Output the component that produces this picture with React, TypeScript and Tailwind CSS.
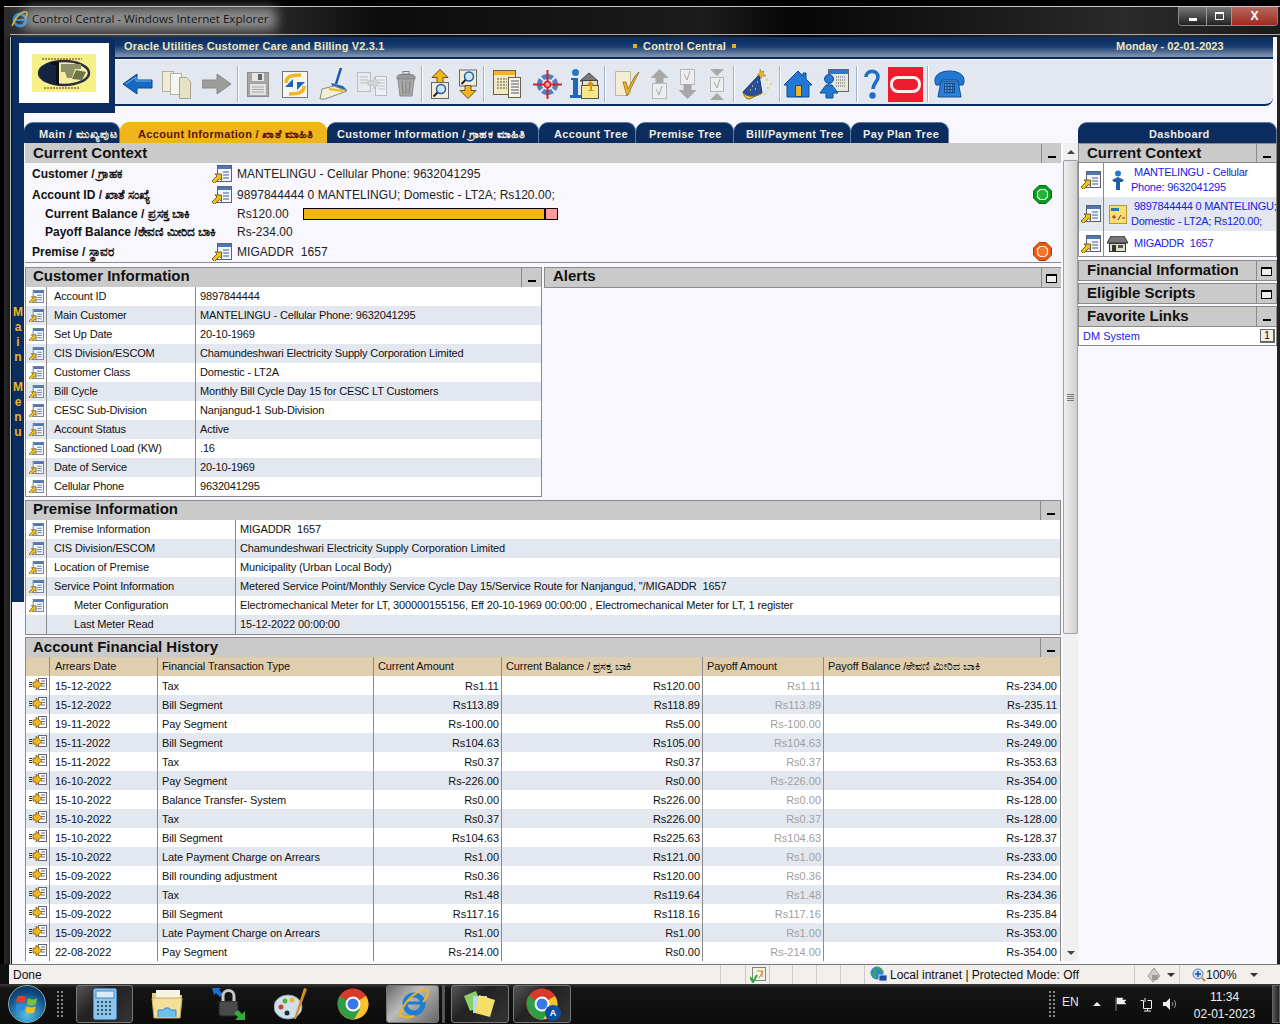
import React from 'react';

const customerRows = [
  ['Account ID', '9897844444'],
  ['Main Customer', 'MANTELINGU - Cellular Phone: 9632041295'],
  ['Set Up Date', '20-10-1969'],
  ['CIS Division/ESCOM', 'Chamundeshwari Electricity Supply Corporation Limited'],
  ['Customer Class', 'Domestic - LT2A'],
  ['Bill Cycle', 'Monthly Bill Cycle Day 15 for CESC LT Customers'],
  ['CESC Sub-Division', 'Nanjangud-1 Sub-Division'],
  ['Account Status', 'Active'],
  ['Sanctioned Load (KW)', '.16'],
  ['Date of Service', '20-10-1969'],
  ['Cellular Phone', '9632041295'],
];

const premiseRows = [
  { label: 'Premise Information', value: 'MIGADDR  1657', icon: true },
  { label: 'CIS Division/ESCOM', value: 'Chamundeshwari Electricity Supply Corporation Limited', icon: true },
  { label: 'Location of Premise', value: 'Municipality (Urban Local Body)', icon: true },
  { label: 'Service Point Information', value: 'Metered Service Point/Monthly Service Cycle Day 15/Service Route for Nanjangud, "/MIGADDR  1657', icon: true },
  { label: 'Meter Configuration', value: 'Electromechanical Meter for LT, 300000155156, Eff 20-10-1969 00:00:00 , Electromechanical Meter for LT, 1 register', icon: true, indent: true },
  { label: 'Last Meter Read', value: '15-12-2022 00:00:00', icon: false, indent: true },
];

const historyRows = [
  ['15-12-2022', 'Tax', 'Rs1.11', 'Rs120.00', 'Rs1.11', 'Rs-234.00'],
  ['15-12-2022', 'Bill Segment', 'Rs113.89', 'Rs118.89', 'Rs113.89', 'Rs-235.11'],
  ['19-11-2022', 'Pay Segment', 'Rs-100.00', 'Rs5.00', 'Rs-100.00', 'Rs-349.00'],
  ['15-11-2022', 'Bill Segment', 'Rs104.63', 'Rs105.00', 'Rs104.63', 'Rs-249.00'],
  ['15-11-2022', 'Tax', 'Rs0.37', 'Rs0.37', 'Rs0.37', 'Rs-353.63'],
  ['16-10-2022', 'Pay Segment', 'Rs-226.00', 'Rs0.00', 'Rs-226.00', 'Rs-354.00'],
  ['15-10-2022', 'Balance Transfer- System', 'Rs0.00', 'Rs226.00', 'Rs0.00', 'Rs-128.00'],
  ['15-10-2022', 'Tax', 'Rs0.37', 'Rs226.00', 'Rs0.37', 'Rs-128.00'],
  ['15-10-2022', 'Bill Segment', 'Rs104.63', 'Rs225.63', 'Rs104.63', 'Rs-128.37'],
  ['15-10-2022', 'Late Payment Charge on Arrears', 'Rs1.00', 'Rs121.00', 'Rs1.00', 'Rs-233.00'],
  ['15-09-2022', 'Bill rounding adjustment', 'Rs0.36', 'Rs120.00', 'Rs0.36', 'Rs-234.00'],
  ['15-09-2022', 'Tax', 'Rs1.48', 'Rs119.64', 'Rs1.48', 'Rs-234.36'],
  ['15-09-2022', 'Bill Segment', 'Rs117.16', 'Rs118.16', 'Rs117.16', 'Rs-235.84'],
  ['15-09-2022', 'Late Payment Charge on Arrears', 'Rs1.00', 'Rs1.00', 'Rs1.00', 'Rs-353.00'],
  ['22-08-2022', 'Pay Segment', 'Rs-214.00', 'Rs0.00', 'Rs-214.00', 'Rs-354.00'],
];

function GoIcon({ size = 15 }: { size?: number }) {
  return (
    <svg width={size} height={size * 0.9} viewBox="0 0 20 18" className="shrink-0">
      <rect x="5.500" y=".500" width="14" height="16" fill="#f4f6fb" stroke="#5a6070" />
      <rect x="6" y="1" width="13" height="3" fill="#4a78b8" />
      <path d="M11 7h6M11 10h6M11 13h6" stroke="#3b5f9a" />
      <path d="M0 16l5-5-2-2h6.500v6.500l-2-2-5 5z" fill="#f2c21c" stroke="#3a2c08" strokeWidth=".7" />
    </svg>
  );
}

function RowIcon() {
  return (
    <svg width="18" height="13" viewBox="0 0 18 13" className="shrink-0 -mt-[3px]">
      <rect x="9.500" y=".500" width="8" height="11" fill="#fff" stroke="#667" />
      <path d="M12 3h4M12 5.500h4M12 8h4" stroke="#667" />
      <path d="M0 4.500h3M0 6.500h3M0 8.500h3" stroke="#333" />
      <path d="M4 4h3V1l6 5.500L7 12V9H4z" fill="#f2b61c" stroke="#7a5a10" strokeWidth=".8" />
    </svg>
  );
}

function Toggle({ open }: { open?: boolean }) {
  return (
    <span className="w-[20px] self-stretch border-l border-[#8a8a8a] flex items-center justify-center shrink-0">
      {open ? (
        <span className="w-[11px] h-[9px] border border-black border-t-2 bg-[#eee] mt-px" />
      ) : (
        <span className="w-[8px] h-[2px] bg-black mt-[7px]" />
      )}
    </span>
  );
}

function PanelHeader({ title, open, h = 'h-[19px]', pl = 'pl-[7px]' }: { title: string; open?: boolean; h?: string; pl?: string }) {
  return (
    <div className={`bg-[#cacaca] flex items-center justify-between shrink-0 ${h}`}>
      <span className={`text-[15px] leading-[17px] font-bold text-[#111] self-start ${pl}`}>{title}</span>
      <Toggle open={open} />
    </div>
  );
}

function Octagon({ color, edge, inner }: { color: string; edge: string; inner: string }) {
  return (
    <svg width="19" height="19" viewBox="0 0 19 19">
      <path d="M6 .500h7L18.500 6v7L13 18.500H6L.500 13V6z" fill={color} stroke={edge} />
      <path d="M7 4.500h5L14.500 7v5L12 14.500H7L4.500 12V7z" fill={inner} stroke="#fff" strokeWidth="1.200" opacity=".9" />
    </svg>
  );
}

function BackIcon() {
  return (
    <svg width="30" height="22" viewBox="0 0 30 22" className="ml-[8px]">
      <path d="M0 11L14 1v6h15v8H14v6z" fill="#1668c4" stroke="#0c4a94" />
      <path d="M3 11L13 4v4h15" fill="none" stroke="#7bb2ea" />
    </svg>
  );
}

function CopyIcon() {
  return (
    <svg width="29" height="29" viewBox="0 0 29 29" className="ml-[9px]">
      <rect x=".500" y="1.500" width="11" height="20" fill="#f0ecd8" stroke="#b5b09a" />
      <rect x="8.500" y="3.500" width="11" height="21" fill="#f5f5f3" stroke="#b5b09a" />
      <path d="M17.500 7.500h7l4 4v17h-11z" fill="#e6e2c8" stroke="#a8a48c" />
    </svg>
  );
}

function ForwardIcon() {
  return (
    <svg width="29" height="22" viewBox="0 0 29 22" className="ml-[11px]">
      <path d="M29 11L15 1v6H0v8h15v6z" fill="#9c9c9c" stroke="#888" />
    </svg>
  );
}

function Sep({ ml }: { ml: string }) {
  return <span className={`w-[2px] h-[36px] bg-[#a4b0c6] border-r border-white ${ml}`} />;
}

function SaveIcon() {
  return (
    <svg width="22" height="25" viewBox="0 0 22 25" className="ml-[8px]">
      <rect x=".500" y=".500" width="21" height="24" fill="#a6a6a6" stroke="#8c8c8c" />
      <rect x="5" y="1" width="12" height="8" fill="#e6e6e6" />
      <rect x="11" y="2" width="4" height="6" fill="#666" />
      <rect x="3" y="12" width="16" height="11" fill="#e2e2e2" />
      <path d="M5 15h12M5 17.500h12M5 20h12" stroke="#aaa" />
    </svg>
  );
}

function RefreshIcon() {
  return (
    <svg width="26" height="27" viewBox="0 0 26 27" className="ml-[13px]">
      <rect x=".500" y=".500" width="25" height="26" fill="#f5f5f2" stroke="#777" />
      <path d="M4 12c0-6 4-8 15-8" fill="none" stroke="#f2b61c" strokeWidth="3.500" />
      <path d="M22 15c0 6-4 8-15 8" fill="none" stroke="#f2b61c" strokeWidth="3.500" />
      <path d="M3 16l8-8v8z" fill="#1d66b8" />
      <path d="M23 11l-8 8v-8z" fill="#1d66b8" />
    </svg>
  );
}

function BroomIcon() {
  return (
    <svg width="29" height="32" viewBox="0 0 29 32" className="ml-[11px]">
      <path d="M22 0l-5 16" stroke="#1b55a8" strokeWidth="2.500" />
      <path d="M12 15l12 3 4 4-14-2z" fill="#1e66be" />
      <path d="M3 21l12-3 13 5-22 8-5 0z" fill="#f1eed6" stroke="#8a8a82" />
      <path d="M10 21l14 2" stroke="#f2b61c" strokeWidth="2" />
    </svg>
  );
}

function CompareIcon() {
  return (
    <svg width="30" height="24" viewBox="0 0 30 24" className="ml-[9px]">
      <rect x=".500" y=".500" width="13" height="19" fill="#e8eaee" stroke="#b9bcc2" />
      <rect x="18.500" y="4.500" width="11" height="19" fill="#eff0f3" stroke="#b9bcc2" />
      <path d="M3 5h8M3 8h8M3 11h8M21 8h7M21 11h7M21 14h7M21 17h7" stroke="#bbbfc6" />
      <path d="M11 9h6V5l5 6-5 6v-4h-6z" fill="#d4d6da" stroke="#bdbfc4" />
    </svg>
  );
}

function TrashIcon() {
  return (
    <svg width="20" height="26" viewBox="0 0 20 26" className="ml-[9px]">
      <path d="M1 6c0-2 4-3 9-3s9 1 9 3v2H1z" fill="#9a9a9a" stroke="#808080" />
      <rect x="7" y=".500" width="6" height="3" fill="none" stroke="#808080" />
      <path d="M2 8h16l-2 17H4z" fill="#a8a8a8" stroke="#8a8a8a" />
      <path d="M6 10l1 13M10 10v13M14 10l-1 13" stroke="#7e7e7e" />
    </svg>
  );
}

function MagBox() {
  return (
    <g>
      <rect x="0" y="0" width="17" height="16" fill="#f3ecd6" stroke="#666" />
      <circle cx="9.500" cy="6.500" r="4.500" fill="#cfe4f8" stroke="#1a5fa8" strokeWidth="1.500" />
      <path d="M6 10l-4 4" stroke="#222" strokeWidth="2" />
    </g>
  );
}

function UpFindIcon() {
  return (
    <svg width="18" height="30" viewBox="0 -.5 18 30" className="ml-[8px]">
      <path d="M9 0l8 8h-5v6H6V8H1z" fill="#f2b61c" stroke="#6b4e0a" />
      <g transform="translate(.5 13)"><MagBox /></g>
    </svg>
  );
}

function DownFindIcon() {
  return (
    <svg width="18" height="30" viewBox="0 -.5 18 30" className="ml-[10px]">
      <g transform="translate(.5 .5)"><MagBox /></g>
      <path d="M9 29l8-8h-5v-5H6v5H1z" fill="#f2b61c" stroke="#6b4e0a" />
    </svg>
  );
}

function BookIcon() {
  return (
    <svg width="28" height="28" viewBox="0 0 28 28" className="ml-[8px]">
      <rect x=".500" y=".500" width="22" height="24" fill="#f2e8c2" stroke="#6b6246" />
      <rect x="1" y="1" width="21" height="4" fill="#f2b61c" />
      <path d="M4 9h10M4 12h10M4 15h10M4 18h10" stroke="#555" strokeDasharray="2 1" />
      <rect x="15.500" y="7.500" width="12" height="20" fill="#f4f4f0" stroke="#6b6246" />
      <path d="M18 11h8M18 14h8M18 17h8M18 20h8M18 23h8" stroke="#555" />
    </svg>
  );
}

function CrossIcon() {
  return (
    <svg width="29" height="29" viewBox="0 0 29 29" className="ml-[12px]">
      <path d="M8 6a12 12 0 0 1 13 0l-3 4a7 7 0 0 0-7 0zM23 8a12 12 0 0 1 0 13l-4-3a7 7 0 0 0 0-7zM21 23a12 12 0 0 1-13 0l3-4a7 7 0 0 0 7 0zM6 21a12 12 0 0 1 0-13l4 3a7 7 0 0 0 0 7z" fill="#4d82c2" />
      <path d="M14.500 0v29M0 14.500h29" stroke="#d81e28" strokeWidth="2" />
      <circle cx="14.500" cy="14.500" r="3" fill="#f2a0a0" stroke="#d81e28" strokeWidth="1.500" />
    </svg>
  );
}

function InfoIcon() {
  return (
    <svg width="29" height="30" viewBox="0 0 29 30" className="ml-[8px]">
      <circle cx="5.500" cy="3.500" r="3.500" fill="#2a76c6" />
      <path d="M1 9h7v17h3v3H0v-3h3V11H1z" fill="#1f66b4" />
      <path d="M10 12l9-8 9 8z" fill="#777" stroke="#444" />
      <rect x="12.500" y="11.500" width="15" height="10" fill="#e8dfc6" stroke="#444" />
      <rect x="11.500" y="16.500" width="17" height="13" fill="#f5e88c" stroke="#555" />
      <path d="M20 12l4 3-2 2v4h2v1h-6v-1h2v-4l-3-1z" fill="#d8930f" />
    </svg>
  );
}

function CheckIcon() {
  return (
    <svg width="25" height="28" viewBox="0 0 25 28" className="ml-[9px]">
      <path d="M.500 1.500h15v22l-4 2H.500z" fill="#f3eed3" stroke="#bdb89c" />
      <path d="M8 12l4 14L24 2l-4 4-7 13-2-7z" fill="#f2b61c" stroke="#7f5a08" strokeWidth=".7" />
    </svg>
  );
}

function UpCheckIcon() {
  return (
    <svg width="19" height="30" viewBox="0 0 19 30" className="ml-[10px]">
      <path d="M9.500 0l9 9h-5v6h-8V9h-5z" fill="#a8a8a8" />
      <rect x="2.500" y="14.500" width="14" height="15" fill="#eceef0" stroke="#b7b7b7" />
      <path d="M6 20l3 6 3-9" fill="none" stroke="#a8a8a8" />
    </svg>
  );
}

function DownCheckIcon() {
  return (
    <svg width="19" height="30" viewBox="0 0 19 30" className="ml-[9px]">
      <rect x="2.500" y=".500" width="14" height="15" fill="#eceef0" stroke="#b7b7b7" />
      <path d="M6 5l3 6 3-9" fill="none" stroke="#a8a8a8" />
      <path d="M9.500 30l9-9h-5v-6h-8v6h-5z" fill="#a8a8a8" />
    </svg>
  );
}

function BothCheckIcon() {
  return (
    <svg width="18" height="31" viewBox="0 0 18 31" className="ml-[11px]">
      <path d="M9 7l7-7H2zM9 24l7 7H2z" fill="#a8a8a8" />
      <rect x="2.500" y="8.500" width="13" height="14" fill="#eceef0" stroke="#b7b7b7" />
      <path d="M6 13l3 6 3-9" fill="none" stroke="#a8a8a8" />
    </svg>
  );
}

function HatIcon() {
  return (
    <svg width="31" height="31" viewBox="0 0 31 31" className="ml-[7px]">
      <path d="M1 23L17 6l3 18c-6 4-16 5-19-1z" fill="#26509c" stroke="#142e66" />
      <path d="M1 23c1 4 3 7 6 7l13-6c-6 4-16 5-19-1z" fill="#f2d050" stroke="#8a6a10" />
      <path d="M18 0l1 3 3-1-1 3 3 2-4 0-1 3-1-3-3-1 3-2z" fill="#f2b61c" stroke="#8a6a10" strokeWidth=".5" />
      <path d="M24 11h2M28 15h2M25 19h2M22 25h2M10 17h1M13 20h1M8 21h1M15 13h1" stroke="#f2c832" strokeWidth="1.500" />
    </svg>
  );
}

function HomeIcon() {
  return (
    <svg width="28" height="28" viewBox="0 0 28 28" className="ml-[3px]">
      <path d="M0 15L14 1l5 5V3h3v6l6 6h-3v12H3V15z" fill="#2378d4" stroke="#0f4c94" />
      <rect x="11.500" y="15.500" width="6" height="11" fill="#f2b61c" stroke="#0f4c94" />
    </svg>
  );
}

function PersonDocIcon() {
  return (
    <svg width="30" height="30" viewBox="0 0 30 30" className="ml-[7px]">
      <rect x="9.500" y=".500" width="20" height="22" fill="#e6e6dd" stroke="#666" />
      <rect x="10" y="1" width="19" height="4" fill="#2d78cc" />
      <path d="M17 8h10M17 11h10M17 14h10M17 17h10" stroke="#555" strokeDasharray="1 1" />
      <circle cx="10" cy="10" r="4.500" fill="#2378d4" stroke="#0f4c94" />
      <path d="M1 24l6-8h6l6 8h-5v5H7v-5z" fill="#2378d4" stroke="#0f4c94" />
    </svg>
  );
}

function HelpIcon() {
  return (
    <svg width="16" height="30" viewBox="0 0 16 30" className="ml-[6px]">
      <path d="M2 8C2 1 14 0 14 8c0 5-5 6-5 12" fill="none" stroke="#1f6fc8" strokeWidth="3.600" />
      <circle cx="8.500" cy="26.500" r="3.200" fill="#1f6fc8" />
    </svg>
  );
}

function OracleIcon() {
  return (
    <span className="ml-[8px] w-[35px] h-[35px] bg-[#ee1c2e] flex items-center justify-center">
      <span className="w-[31px] h-[17px] rounded-[8px] border-[3px] border-[#fdf0f0]" />
    </span>
  );
}

function PhoneIcon() {
  return (
    <svg width="31" height="28" viewBox="0 0 31 28" className="ml-[5px]">
      <path d="M1 12C0 4 8 1 15.500 1S31 4 30 12l-1 3h-5l-1-5H8l-1 5H2z" fill="#2378d4" stroke="#0f4c94" />
      <path d="M7 11h17l3 16H4z" fill="#2a80d8" stroke="#0f4c94" />
      <rect x="10" y="13" width="11" height="10" fill="#0f4c94" />
      <path d="M11 15h9M11 18h9M11 21h9" stroke="#cfe4f8" strokeDasharray="1.500 1.300" />
    </svg>
  );
}

function Toolbar() {
  return (
    <div className="h-[46px] mt-[1px] pt-[4px] bg-[#e2e7f0] border-b-2 border-[#0b2c5e] rounded-br-[8px] flex items-center">
      <BackIcon />
      <CopyIcon />
      <ForwardIcon />
      <Sep ml="ml-[6px]" />
      <SaveIcon />
      <RefreshIcon />
      <BroomIcon />
      <CompareIcon />
      <TrashIcon />
      <Sep ml="ml-[5px]" />
      <UpFindIcon />
      <DownFindIcon />
      <Sep ml="ml-[6px]" />
      <BookIcon />
      <CrossIcon />
      <InfoIcon />
      <Sep ml="ml-[5px]" />
      <CheckIcon />
      <UpCheckIcon />
      <DownCheckIcon />
      <BothCheckIcon />
      <Sep ml="ml-[7px]" />
      <HatIcon />
      <Sep ml="ml-[6px]" />
      <HomeIcon />
      <PersonDocIcon />
      <Sep ml="ml-[7px]" />
      <HelpIcon />
      <OracleIcon />
      <Sep ml="ml-[4px]" />
      <PhoneIcon />
    </div>
  );
}

function Tab({ w, active, children, className = '' }: { w: string; active?: boolean; children: React.ReactNode; className?: string }) {
  return (
    <div
      className={`h-[21px] pt-[2px] rounded-t-[9px] border-t border-r flex items-center text-[11px] font-bold tracking-[0.35px] whitespace-nowrap shrink-0 ${w} ${className} ${
        active ? 'bg-[#f1b51c] text-[#5c1408] border-[#f1b51c]' : 'bg-[#0b2c5e] text-[#f0ede0] border-[#5f7ba3]'
      }`}
    >
      {children}
    </div>
  );
}

function CustomerTable() {
  return (
    <div className="border border-t-0 border-[#8a8a8a] bg-white">
      {customerRows.map(([label, value], i) => (
        <div key={label} className={`h-[19px] flex items-center text-[11px] tracking-[-0.15px] text-[#111] ${i % 2 ? 'bg-[#e3e8f0]' : 'bg-white'}`}>
          <span className="w-[21px] h-full flex items-center justify-center border-r border-[#8a8a8a]"><GoIcon /></span>
          <span className="w-[149px] h-full pl-[7px] leading-[19px] border-r border-[#8a8a8a]">{label}</span>
          <span className="pl-[4px] leading-[19px]">{value}</span>
        </div>
      ))}
    </div>
  );
}

function PremiseTable() {
  return (
    <div className="border border-t-0 border-[#8a8a8a] bg-white">
      {premiseRows.map((r, i) => (
        <div key={r.label} className={`h-[19px] flex items-center text-[11px] tracking-[-0.12px] text-[#111] ${i % 2 ? 'bg-[#e3e8f0]' : 'bg-white'}`}>
          <span className="w-[21px] h-full flex items-center justify-center border-r border-[#8a8a8a]">{r.icon && <GoIcon />}</span>
          <span className={`w-[189px] h-full leading-[19px] border-r border-[#8a8a8a] ${r.indent ? 'pl-[27px]' : 'pl-[7px]'}`}>{r.label}</span>
          <span className="pl-[4px] leading-[19px] whitespace-pre">{r.value}</span>
        </div>
      ))}
    </div>
  );
}

function HistoryTable() {
  return (
    <div className="border-l border-r border-[#8a8a8a] bg-white">
      <div className="h-[19px] bg-[#e0cfae] flex text-[11px] tracking-[-0.1px] leading-[19px] text-[#111]">
        <span className="w-[24px] border-r border-[#8a8a8a]" />
        <span className="w-[108px] pl-[5px] border-r border-[#8a8a8a]">Arrears Date</span>
        <span className="w-[216px] pl-[4px] border-r border-[#8a8a8a]">Financial Transaction Type</span>
        <span className="w-[128px] pl-[4px] border-r border-[#8a8a8a]">Current Amount</span>
        <span className="w-[201px] pl-[4px] border-r border-[#8a8a8a]">Current Balance / ಪ್ರಸಕ್ತ ಬಾಕಿ</span>
        <span className="w-[121px] pl-[4px] border-r border-[#8a8a8a]">Payoff Amount</span>
        <span className="flex-1 pl-[4px]">Payoff Balance /ಠೇವಣಿ ಮೀರಿದ ಬಾಕಿ</span>
      </div>
      {historyRows.map((r, i) => (
        <div key={i} className={`h-[19px] flex text-[11px] leading-[20px] text-[#111] ${i % 2 ? 'bg-[#e3e8f0]' : 'bg-white'}`}>
          <span className="w-[24px] flex items-center justify-center border-r border-[#8a8a8a]"><RowIcon /></span>
          <span className="w-[108px] pl-[5px] border-r border-[#8a8a8a]">{r[0]}</span>
          <span className="w-[216px] pl-[4px] tracking-[-0.1px] border-r border-[#8a8a8a]">{r[1]}</span>
          <span className="w-[128px] pr-[2px] text-right border-r border-[#8a8a8a]">{r[2]}</span>
          <span className="w-[201px] pr-[2px] text-right border-r border-[#8a8a8a]">{r[3]}</span>
          <span className="w-[121px] pr-[2px] text-right border-r border-[#8a8a8a] text-[#a0a0a0]">{r[4]}</span>
          <span className="flex-1 pr-[3px] text-right">{r[5]}</span>
        </div>
      ))}
    </div>
  );
}

function CurrentContext() {
  const ctx = 'text-[12px] tracking-[0.05px] text-[#222] whitespace-nowrap';
  const lab = 'text-[12px] font-bold text-[#111] whitespace-nowrap';
  return (
    <div className="border-b border-[#8a8a8a]">
      <PanelHeader title="Current Context" h="h-[20px] pt-[1px]" pl="pl-[8px]" />
      <div className="relative bg-[#f7f7fd] h-[99px] pl-[7px] grid grid-cols-[180px_25px_1fr] grid-rows-[22px_20px_18px_18px_21px] items-center">
        <span className={lab}>Customer / ಗ್ರಾಹಕ</span><GoIcon size={20} /><span className={ctx}>MANTELINGU - Cellular Phone: 9632041295</span>
        <span className={lab}>Account ID / ಖಾತೆ ಸಂಖ್ಯೆ</span><GoIcon size={20} /><span className={ctx}>9897844444 0 MANTELINGU; Domestic - LT2A; Rs120.00;</span>
        <span className={`${lab} pl-[13px]`}>Current Balance / ಪ್ರಸಕ್ತ ಬಾಕಿ</span><span />
        <span className={`${ctx} flex items-center`}>
          <span className="w-[66px]">Rs120.00</span>
          <span className="w-[255px] h-[12px] border border-black bg-[#f1b51c] flex justify-end">
            <span className="w-[13px] bg-[#ff9a9a] border-l-2 border-black" />
          </span>
        </span>
        <span className={`${lab} pl-[13px]`}>Payoff Balance /ಠೇವಣಿ ಮೀರಿದ ಬಾಕಿ</span><span /><span className={ctx}>Rs-234.00</span>
        <span className={lab}>Premise / ಸ್ಥಾವರ</span><GoIcon size={20} /><span className={`${ctx} whitespace-pre`}>MIGADDR  1657</span>
        <span className="absolute right-[9px] top-[22px]"><Octagon color="#0a9a1e" edge="#066a12" inner="#22b83a" /></span>
        <span className="absolute right-[9px] top-[79px]"><Octagon color="#ec5a12" edge="#a83a08" inner="#f47a30" /></span>
      </div>
    </div>
  );
}

function MainColumn() {
  return (
    <div className="w-[1036px] shrink-0 flex flex-col">
      <CurrentContext />
      <div className="mt-[4px] flex gap-[2px] items-start">
        <div className="w-[517px] shrink-0">
          <div className="border border-[#8a8a8a] border-b-0"><PanelHeader title="Customer Information" pl="pl-[7px] -mt-[1px]" /></div>
          <CustomerTable />
        </div>
        <div className="flex-1 border border-[#8a8a8a] border-r-0"><PanelHeader title="Alerts" open pl="pl-[8px] -mt-[1px]" /></div>
      </div>
      <div className="mt-[3px]">
        <div className="border border-[#8a8a8a] border-b-0"><PanelHeader title="Premise Information" pl="pl-[7px] -mt-[1px]" /></div>
        <PremiseTable />
      </div>
      <div className="mt-[2px]">
        <div className="border border-[#8a8a8a] border-b-0"><PanelHeader title="Account Financial History" /></div>
        <HistoryTable />
      </div>
    </div>
  );
}

function Scrollbar() {
  return (
    <div className="w-[15px] ml-[2px] shrink-0 bg-[#f0f0f0] flex flex-col h-[818px]">
      <div className="h-[17px] flex items-center justify-center"><span className="border-x-[4px] border-x-transparent border-b-[4px] border-b-[#444]" /></div>
      <div className="h-[474px] border border-[#a0a0a0] rounded-[2px] flex items-center justify-center bg-[linear-gradient(90deg,#f0f0f0,#cfcfcf)]">
        <span className="w-[7px] h-[7px] border-y-[3px] border-double border-[#777]" />
      </div>
      <div className="flex-1" />
      <div className="h-[17px] flex items-center justify-center"><span className="border-x-[4px] border-x-transparent border-t-[4px] border-t-[#444]" /></div>
    </div>
  );
}

function RightRow({ alt, sub, h, children }: { alt?: boolean; sub: React.ReactNode; h: string; children: React.ReactNode }) {
  return (
    <div className={`flex ${h} ${alt ? 'bg-[#e3e8f0]' : 'bg-white'}`}>
      <span className="w-[25px] shrink-0 border-r border-[#8a8a8a] flex items-center justify-center"><GoIcon size={20} /></span>
      <span className="w-[27px] shrink-0 flex items-center justify-center">{sub}</span>
      <span className="flex-1 min-w-0 text-[11px] tracking-[-0.25px] leading-[15px] text-[#1a1ae6] indent-[3px] whitespace-nowrap self-center">
        {children}
      </span>
    </div>
  );
}

function SidePanel() {
  const person = (
    <svg width="14" height="20" viewBox="0 0 14 20">
      <circle cx="7" cy="3.500" r="3" fill="#2378d4" />
      <path d="M1 10l6-3 6 3-2 2h-2v8H5v-8H3z" fill="#1d5ea6" />
    </svg>
  );
  const calc = (
    <svg width="18" height="19" viewBox="0 0 18 19">
      <rect x=".500" y=".500" width="17" height="18" fill="#f5e070" stroke="#b09a3a" />
      <rect x="2" y="3" width="8" height="3" fill="#2a76c6" />
      <path d="M3 12h4M5 10v4M9 15l3-5M13 13h3" stroke="#a02020" />
    </svg>
  );
  const house = (
    <svg width="21" height="16" viewBox="0 0 21 16">
      <path d="M4 0h13l4 7H0z" fill="#777" stroke="#333" />
      <rect x="2.500" y="7.500" width="16" height="8" fill="#e3ddc8" stroke="#333" />
      <rect x="5" y="9" width="4" height="6" fill="#333" />
      <rect x="11" y="9" width="5" height="3" fill="#555" />
    </svg>
  );
  return (
    <div className="w-[199px] shrink-0 flex flex-col">
      <PanelWrap title="Current Context" h="h-[18px]">
        <RightRow sub={person} h="h-[34px]">MANTELINGU - Cellular<br />Phone: 9632041295</RightRow>
        <RightRow alt sub={calc} h="h-[34px]">9897844444 0 MANTELINGU;<br />Domestic - LT2A; Rs120.00;</RightRow>
        <RightRow sub={house} h="h-[25px]"><span className="whitespace-pre">MIGADDR  1657</span></RightRow>
      </PanelWrap>
      <div className="mt-[3px]"><PanelWrap title="Financial Information" open /></div>
      <div className="mt-[2px]"><PanelWrap title="Eligible Scripts" open /></div>
      <div className="mt-[2px]">
        <PanelWrap title="Favorite Links">
          <div className="h-[18px] bg-white flex items-center justify-between pl-[4px] pr-[1px] text-[11px] text-[#1a1ae6]">
            <span>DM System</span>
            <span className="w-[15px] h-[14px] border border-[#666] border-b-2 border-r-2 bg-[#f0efe6] text-black text-[10px] leading-[12px] text-center">1</span>
          </div>
        </PanelWrap>
      </div>
    </div>
  );
}

function PanelWrap({ title, open, h, children }: { title: string; open?: boolean; h?: string; children?: React.ReactNode }) {
  return (
    <div className="border border-[#8a8a8a]">
      <PanelHeader title={title} open={open} h={h} pl="pl-[8px]" />
      {children && <div className="border-t border-[#8a8a8a]">{children}</div>}
    </div>
  );
}

function AppArea() {
  return (
    <div className="flex-1 min-w-0 h-full bg-[#f7f7fd] flex flex-col overflow-hidden">
      <div className="flex h-[76px] shrink-0">
        <div className="w-[103px] h-[76px] shrink-0 bg-[#0b2c5e] relative">
          <div className="absolute left-[7px] top-[6px] w-[90px] h-[60px] bg-white flex items-center justify-center">
            <svg width="64" height="38" viewBox="0 0 64 38">
              <rect width="64" height="38" fill="#f6f088" />
              <path d="M10 5h40M12 34h36" stroke="#b08a50" strokeWidth="2" strokeDasharray="2 1" />
              <ellipse cx="32" cy="19" rx="25" ry="12" fill="#f4eea0" stroke="#2a3040" strokeWidth="2.500" />
              <path d="M7 19c0-7 11-12 18-12v24C18 31 7 26 7 19z" fill="#14243e" />
              <path d="M19 8h8v23h-3V11h-5z" fill="#111" />
              <path d="M29 10h20v5h-6l-3 9h-5l-2-6h-4z" fill="#8e9168" />
              <path d="M44 16l10 2-4 8-10-1z" fill="#6e7248" />
            </svg>
          </div>
        </div>
        <div className="flex-1 min-w-0 pr-[4px]">
          <div className="h-[22px] bg-[linear-gradient(180deg,#0b2c5e_0%,#143a70_45%,#8090ac_95%)] border-b-2 border-[#0b2c5e] relative text-[#f0e8c0] text-[11px] font-bold leading-[18px]">
            <span className="absolute left-[9px] top-0 tracking-[0.15px]">Oracle Utilities Customer Care and Billing V2.3.1</span>
            <span className="absolute left-[518px] top-0 flex items-center gap-[6px] tracking-[0.2px]">
              <span className="w-[4px] h-[4px] bg-[#e6b01c]" />Control Central<span className="w-[4px] h-[4px] bg-[#e6b01c]" />
            </span>
            <span className="absolute left-[1001px] top-0">Monday - 02-01-2023</span>
          </div>
          <Toolbar />
        </div>
      </div>
      <div className="flex flex-1 min-h-0">
        <div className="w-[12px] shrink-0 self-start h-[489px] bg-[#0b2c5e] flex flex-col items-center text-[#f0b51c] text-[12px] font-bold leading-[15px] pt-[192px]">
          {['M', 'a', 'i', 'n', '', 'M', 'e', 'n', 'u'].map((c, i) => (
            <span key={i} className="h-[15px]">{c}</span>
          ))}
        </div>
        <div className="flex-1 min-w-0 pt-[9px] flex flex-col">
          <div className="flex h-[21px] shrink-0">
            <div className="w-[1054px] flex shrink-0">
              <Tab w="w-[96px]" className="pl-[15px]">Main / ಮುಖ್ಯಪುಟ</Tab>
              <Tab w="w-[207px]" active className="pl-[18px]">Account Information / ಖಾತೆ ಮಾಹಿತಿ</Tab>
              <Tab w="w-[212px]" className="pl-[10px]">Customer Information / ಗ್ರಾಹಕ ಮಾಹಿತಿ</Tab>
              <Tab w="w-[97px]" className="pl-[15px]">Account Tree</Tab>
              <Tab w="w-[98px]" className="pl-[13px]">Premise Tree</Tab>
              <Tab w="w-[117px]" className="pl-[12px]">Bill/Payment Tree</Tab>
              <Tab w="w-[98px]" className="pl-[12px]">Pay Plan Tree</Tab>
            </div>
            <Tab w="w-[199px]" className="pl-[71px]">Dashboard</Tab>
          </div>
          <div className="flex flex-1 min-h-0 pl-[1px]">
            <MainColumn />
            <Scrollbar />
            <SidePanel />
          </div>
        </div>
      </div>
    </div>
  );
}

function TitleBar() {
  return (
    <div className="h-[37px] shrink-0 relative bg-[linear-gradient(90deg,#000_0,#000_4px,#2d2d2d_4px,#2a2a2a_20%,#0c0c0c_30%,#1c1c1c_55%,#060606_62%,#2a2a2a_88%,#1a1a1a_100%)]">
      <div className="h-[6px] bg-black" />
      <div className="h-[1px] ml-[4px] bg-[#c8c8c8]" />
      <div className="flex items-center h-[24px] pl-[11px]">
        <svg width="17" height="17" viewBox="0 0 17 17" className="mr-[4px] relative">
          <circle cx="9" cy="9" r="6" fill="none" stroke="#2e8ad8" strokeWidth="3" />
          <path d="M4 9h10" stroke="#2e8ad8" strokeWidth="2" />
          <path d="M1 15C4 6 11 0 15 1c2 1 1 4-1 6" fill="none" stroke="#f2b61c" strokeWidth="1.500" />
        </svg>
        <span className="relative text-[11.6px] text-[#141414] font-['Open_Sans',sans-serif]">
          <span className="absolute -inset-x-[8px] -inset-y-[2px] bg-[#a8a8a8] blur-[6px] opacity-80" />
          <span className="relative">Control Central - Windows Internet Explorer</span>
        </span>
      </div>
      <div className="h-[3px]" />
      <div className="h-[1px] ml-[10px] bg-[#aaa]" />
      <div className="absolute right-[2px] top-[7px] flex h-[19px] rounded-b-[4px] overflow-hidden border border-t-0 border-[#888]">
        <span className="w-[28px] bg-[linear-gradient(180deg,#777,#222)] border-r border-[#999] flex items-center justify-center"><span className="w-[8px] h-[3px] bg-white mt-[6px]" /></span>
        <span className="w-[25px] bg-[linear-gradient(180deg,#777,#222)] border-r border-[#999] flex items-center justify-center"><span className="w-[9px] h-[8px] border border-t-2 border-white" /></span>
        <span className="w-[45px] bg-[linear-gradient(180deg,#b56a60,#a02a1c)] text-white font-bold text-[12px] leading-[18px] text-center">X</span>
      </div>
    </div>
  );
}

function StatusBar() {
  const seg = 'border-l border-[#cfcbc8] h-full flex items-center shrink-0';
  return (
    <div className="h-[20px] shrink-0 flex bg-black">
      <div className="w-[9px] shrink-0 bg-[#111]" />
      <div className="flex-1 bg-[#f1eeec] border-t border-[#777] flex items-center text-[12px] text-[#111]">
        <span className="w-[711px] pl-[4px] pt-[1px] shrink-0">Done</span>
        <span className={`${seg} w-[25px]`} />
        <span className={`${seg} w-[24px] justify-center`}>
          <svg width="16" height="16" viewBox="0 0 16 16">
            <rect x="2.500" y=".500" width="13" height="13" fill="#f4f2e6" stroke="#7a8a78" />
            <path d="M7 4h6l-4 7M12 4v6" fill="none" stroke="#c08a20" />
            <path d="M0 10l3 5 4-7" fill="none" stroke="#2aa83a" strokeWidth="2" />
          </svg>
        </span>
        <span className={`${seg} w-[23px]`} />
        <span className={`${seg} w-[24px]`} />
        <span className={`${seg} w-[24px]`} />
        <span className={`${seg} w-[24px]`} />
        <span className={`${seg} w-[270px] pl-[5px] gap-[3px]`}>
          <svg width="17" height="17" viewBox="0 0 17 17">
            <circle cx="7" cy="7" r="6.500" fill="#2a86d0" />
            <path d="M3 3c3 1 3 4 1 5s1 3 2 4M8 1c0 3 4 2 5 5" fill="none" stroke="#3fae3f" strokeWidth="2" />
            <rect x="9" y="9" width="8" height="6" fill="#1e4c9c" stroke="#c8d4e8" />
          </svg>
          <span className="text-[12px] pt-[1px]">Local intranet | Protected Mode: Off</span>
        </span>
        <span className={`${seg} w-[45px] gap-[6px] pl-[12px]`}>
          <svg width="14" height="16" viewBox="0 0 14 16">
            <path d="M7 1L1 9l5 6 7-6z" fill="#ccc" stroke="#999" />
            <rect x="5" y="8" width="6" height="5" fill="#999" />
          </svg>
          <span className="border-x-[4px] border-x-transparent border-t-[4px] border-t-[#333]" />
        </span>
        <span className={`${seg} pl-[12px]`}>
          <svg width="14" height="14" viewBox="0 0 14 14">
            <circle cx="6" cy="6" r="5" fill="#cfe0f4" stroke="#5a82b0" />
            <path d="M3 6h6M6 3v6" stroke="#1a4fa0" strokeWidth="1.500" />
            <path d="M10 10l3 3" stroke="#b98a2a" strokeWidth="2" />
          </svg>
          <span className="text-[12px] pt-[1px]">100%</span>
          <span className="ml-[13px] border-x-[4px] border-x-transparent border-t-[4px] border-t-[#333]" />
        </span>
      </div>
    </div>
  );
}

function TaskButton({ w, ml, active, children }: { w: string; ml: string; active?: boolean; children?: React.ReactNode }) {
  return (
    <span className={`h-[38px] rounded-[3px] border border-[#777] flex items-center justify-center shrink-0 ${w} ${ml} ${active ? 'bg-[linear-gradient(135deg,#6a6a6a,#bbb_40%,#666)]' : 'bg-[linear-gradient(135deg,#555,#222_40%,#333)]'}`}>
      {children}
    </span>
  );
}

function ChromeIcon({ badge }: { badge?: boolean }) {
  return (
    <span className="relative">
      <svg width="32" height="32" viewBox="0 0 32 32">
        <circle cx="16" cy="16" r="15.500" fill="#d93a2b" />
        <path d="M16 16L3 23.500A15.500 15.500 0 0 1 2.500 8z" fill="#2f9e44" />
        <path d="M3 23.500A15.500 15.500 0 0 0 16 31.500 15.500 15.500 0 0 0 31.500 16 15 15 0 0 0 29 8L16 16z" fill="#f7c52b" />
        <path d="M3 23.500A15.500 15.500 0 0 0 17 31.500L23 21l-14-2z" fill="#2f9e44" />
        <circle cx="16" cy="16" r="7.500" fill="#fff" />
        <circle cx="16" cy="16" r="5.500" fill="#3b78e7" />
      </svg>
      {badge && <span className="absolute -right-[3px] -bottom-[1px] w-[16px] h-[16px] rounded-full bg-[#0b4f9e] text-white text-[9px] leading-[16px] text-center font-bold">A</span>}
    </span>
  );
}

function Taskbar() {
  return (
    <div className="h-[40px] shrink-0 flex items-center bg-[linear-gradient(180deg,#3a3a3a_0,#151515_10%,#0c0c0c_100%)] relative">
      <span className="ml-[8px] w-[38px] h-[38px] rounded-full bg-[radial-gradient(circle_at_50%_80%,#4fc3f0,#0f4a82_65%,#0a2a4a)] border border-[#8aa] flex items-center justify-center shrink-0">
        <svg width="22" height="20" viewBox="0 0 22 20">
          <path d="M1 3c3-2 6-2 9 0l-1 6c-3-2-6-2-9 0z" fill="#e0402a" />
          <path d="M12 4c3 2 6 2 9 0l-1 6c-3 2-6 2-9 0z" fill="#7cc03c" />
          <path d="M0 11c3-2 6-2 8.500 0l-1 6c-3-2-6-2-9 0z" fill="#2a8ae0" />
          <path d="M10.500 12c3 2 6 2 9 0l-1 6c-3 2-6 2-9 0z" fill="#f2c020" />
        </svg>
      </span>
      <span className="ml-[10px] w-[8px] h-[28px] bg-[radial-gradient(#888_1px,transparent_1px)] bg-[length:4px_4px] shrink-0" />
      <TaskButton w="w-[57px]" ml="ml-[12px]">
        <svg width="24" height="32" viewBox="0 0 24 32">
          <rect x=".500" y=".500" width="23" height="31" rx="2" fill="#8cc4ec" stroke="#4a86c0" />
          <rect x="3" y="3" width="18" height="7" fill="#d8ecfa" stroke="#4a86c0" />
          <path d="M4 14h16M4 18h16M4 22h16M4 26h16" stroke="#356" strokeWidth="2" strokeDasharray="2 2" />
        </svg>
      </TaskButton>
      <span className="ml-[18px] shrink-0">
        <svg width="32" height="30" viewBox="0 0 32 30">
          <path d="M1 4h10l2 2h18v8H1z" fill="#e7d070" />
          <path d="M5 1h24v10H5z" fill="#f7f4e6" />
          <path d="M1 9h30l-2 20H3z" fill="#f3e09a" stroke="#c7ab5a" />
          <path d="M7 28v-7h5l2-2h4l2 2h5v7" fill="#6ec0ec" stroke="#3a88c0" />
        </svg>
      </span>
      <span className="ml-[29px] shrink-0">
        <svg width="33" height="34" viewBox="0 0 33 34">
          <path d="M0 1h9l-2 2 4 4-3 3-4-4-2 2z" fill="#1f6fd0" />
          <rect x="7" y="14" width="19" height="15" rx="2" fill="#4a4a4a" stroke="#222" />
          <path d="M11 14V9a5.500 5.500 0 0 1 11 0v5" fill="none" stroke="#c8c8c8" strokeWidth="3" />
          <path d="M33 33h-10l3-3-4-4 4-3 4 4 3-3z" fill="#2fae3a" />
        </svg>
      </span>
      <span className="ml-[29px] shrink-0">
        <svg width="33" height="34" viewBox="0 0 33 34">
          <ellipse cx="14" cy="20" rx="14" ry="12" fill="#cfe0ea" stroke="#8aa2b0" />
          <circle cx="7" cy="20" r="2.500" fill="#d83a30" />
          <circle cx="11" cy="14" r="2.500" fill="#5ab03c" />
          <circle cx="18" cy="13" r="2.500" fill="#e8b820" />
          <circle cx="13" cy="26" r="2.500" fill="#2a2a2a" />
          <path d="M30 1l3 1-11 30h-2z" fill="#d98a2a" />
        </svg>
      </span>
      <span className="ml-[30px] shrink-0"><ChromeIcon /></span>
      <TaskButton w="w-[53px]" ml="ml-[17px]" active>
        <svg width="32" height="32" viewBox="0 0 32 32">
          <circle cx="17" cy="16" r="9" fill="none" stroke="#1a7fd4" strokeWidth="5" />
          <path d="M10 15h15" stroke="#1a7fd4" strokeWidth="3" />
          <path d="M2 29C6 14 20 1 29 2c4 1 1 8-3 12M3 26c2 4 8 4 14 2" fill="none" stroke="#f2b61c" strokeWidth="2" />
        </svg>
      </TaskButton>
      <span className="ml-[3px] w-[3px] h-[38px] bg-[#555] rounded-[1px]" />
      <TaskButton w="w-[58px]" ml="ml-[6px]">
        <svg width="32" height="28" viewBox="0 0 32 28">
          <path d="M0 6l12-5 6 16-12 4z" fill="#8ccf6a" />
          <rect x="9" y="6" width="14" height="17" fill="#b6d8f2" />
          <path d="M15 5l16 5-5 17-15-4z" fill="#f5df6a" />
        </svg>
      </TaskButton>
      <TaskButton w="w-[58px]" ml="ml-[4px]"><ChromeIcon badge /></TaskButton>
      <div className="flex-1" />
      <span className="w-[8px] h-[28px] bg-[radial-gradient(#888_1px,transparent_1px)] bg-[length:4px_4px] shrink-0" />
      <span className="ml-[6px] text-[#e8e8e8] text-[12px] w-[30px] -mt-[4px]">EN</span>
      <span className="ml-[1px] border-x-[4px] border-x-transparent border-b-[4px] border-b-[#eee]" />
      <span className="ml-[14px]">
        <svg width="12" height="14" viewBox="0 0 12 14"><path d="M1 0v14M2 1h6l-1 2h4l-2 2 2 2H2z" fill="#eee" stroke="#eee" strokeWidth=".5" /></svg>
      </span>
      <span className="ml-[12px]">
        <svg width="14" height="15" viewBox="0 0 14 15"><path d="M1.500 3.500h3M4.500 3.500v8h8v-8h-4M5 14h7M8.500 11v3M6 1v4" fill="none" stroke="#eee" /></svg>
      </span>
      <span className="ml-[10px]">
        <svg width="14" height="14" viewBox="0 0 14 14"><path d="M0 5h3l4-4v12L3 9H0z" fill="#eee" /><path d="M9 5c1 1 1 3 0 4M11 3c2 2 2 6 0 8" fill="none" stroke="#999" /></svg>
      </span>
      <span className="w-[75px] ml-[10px] mr-[18px] pt-[3px] text-center text-[#f0f0f0] text-[12px] leading-[17px]">
        <span className="block">11:34</span>
        <span className="block">02-01-2023</span>
      </span>
      <span className="w-[8px] h-[38px] border border-[#666] bg-[linear-gradient(90deg,#555,#222)] absolute right-0 top-[1px]" />
    </div>
  );
}

export default function App() {
  return (
    <div className="w-[1280px] h-[1024px] overflow-hidden bg-black flex flex-col font-['Liberation_Sans',sans-serif]">
      <TitleBar />
      <div className="h-[927px] shrink-0 flex">
        <div className="w-[12px] shrink-0 bg-[linear-gradient(90deg,#000_0,#000_4px,#2a2a2a_4px,#1c1c1c_10px,#bbb_10px,#bbb_11px,#111_11px)]" />
        <AppArea />
        <div className="w-[3px] shrink-0 bg-[#222]" />
      </div>
      <StatusBar />
      <Taskbar />
    </div>
  );
}
